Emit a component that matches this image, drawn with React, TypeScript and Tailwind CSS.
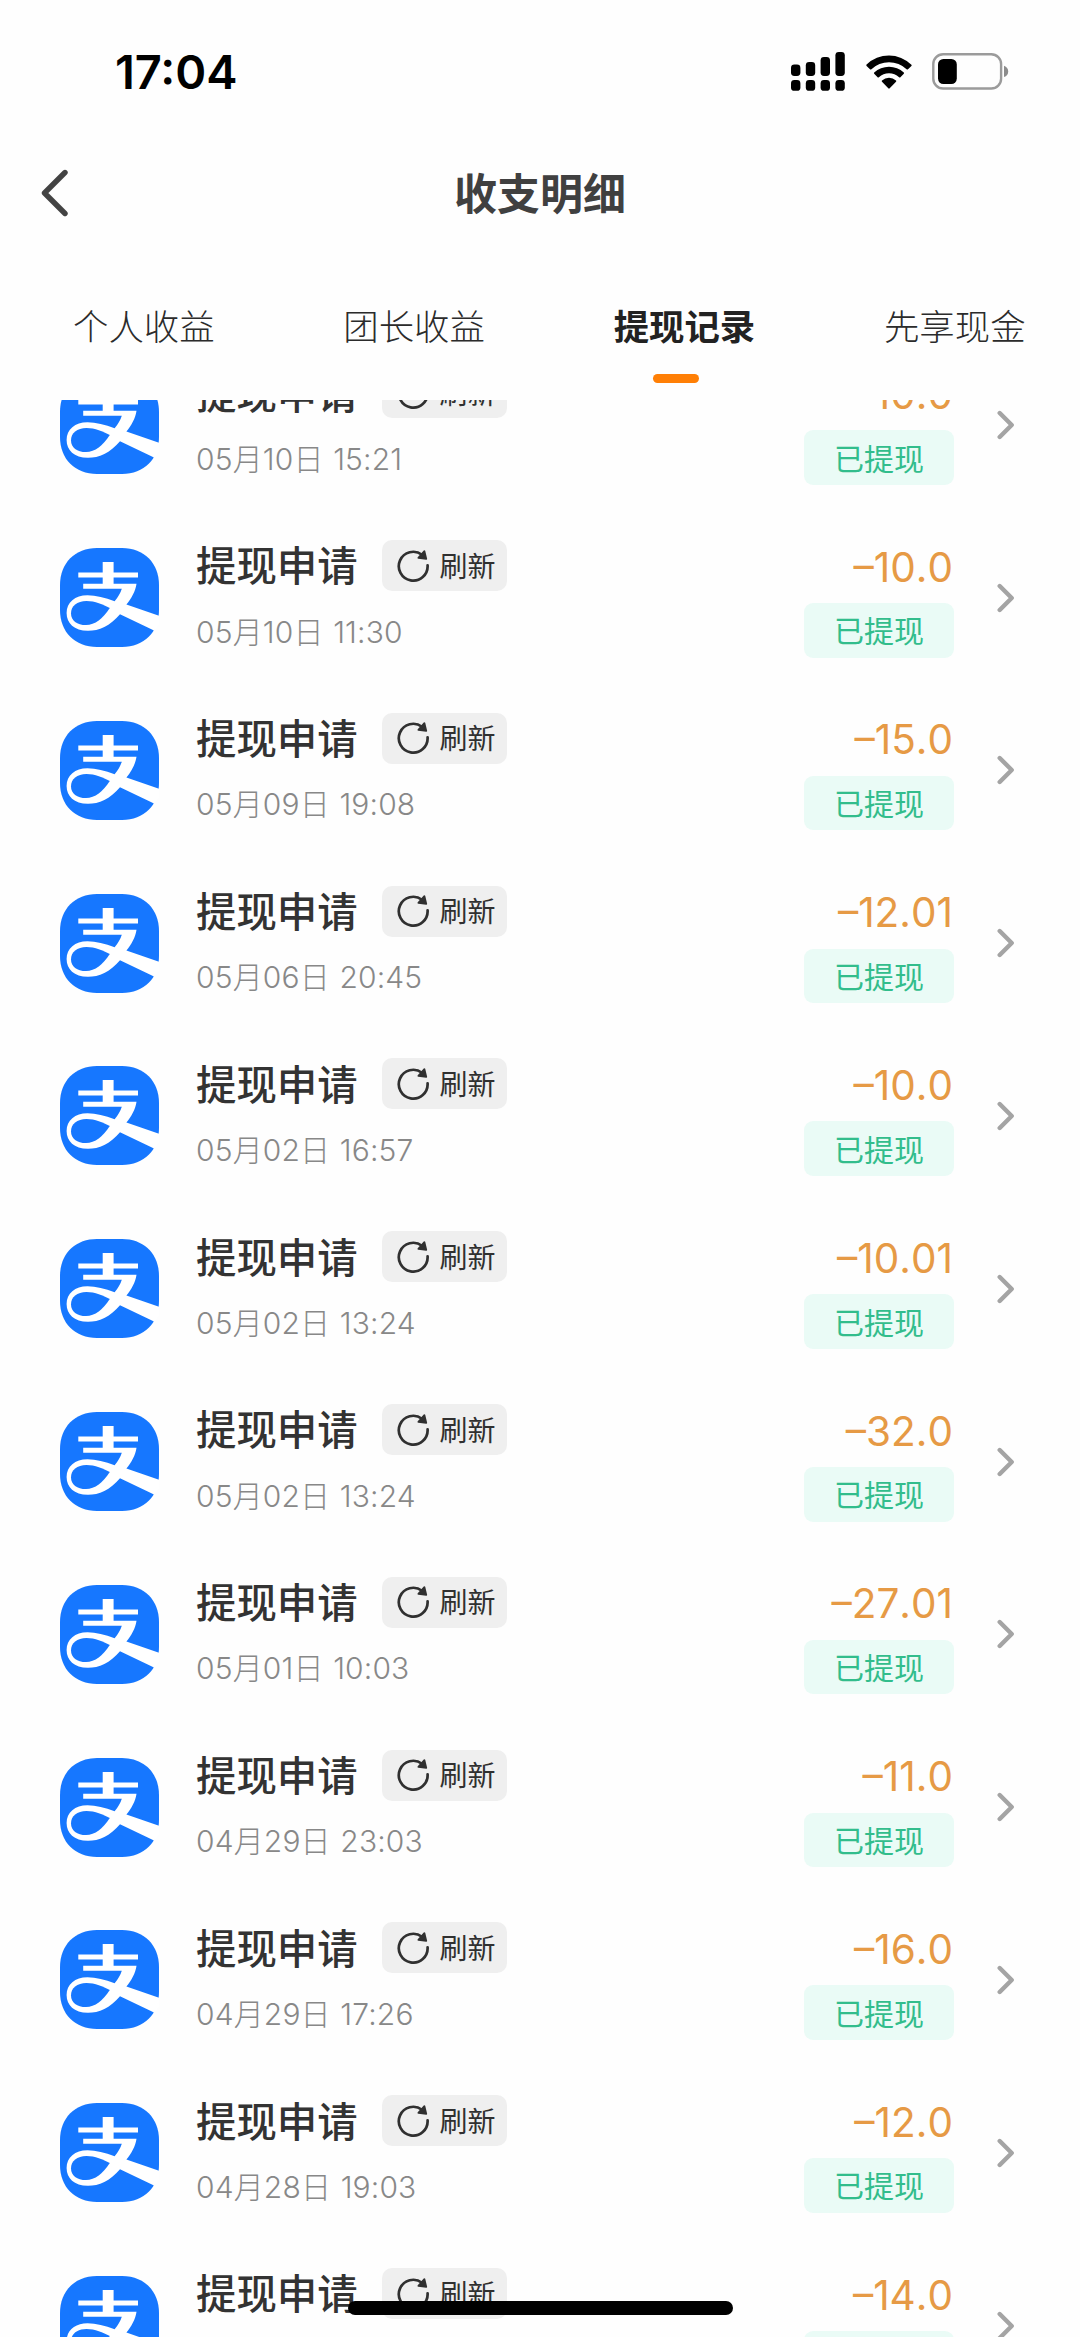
type Withdrawal = {
  time: string;
  amount: string;
};

const TABS = ['个人收益', '团长收益', '提现记录', '先享现金'];
const ACTIVE_TAB = '提现记录';

const WITHDRAWALS: Withdrawal[] = [
  { time: '05月10日 15:21', amount: '10.0' },
  { time: '05月10日 11:30', amount: '10.0' },
  { time: '05月09日 19:08', amount: '15.0' },
  { time: '05月06日 20:45', amount: '12.01' },
  { time: '05月02日 16:57', amount: '10.0' },
  { time: '05月02日 13:24', amount: '10.01' },
  { time: '05月02日 13:24', amount: '32.0' },
  { time: '05月01日 10:03', amount: '27.01' },
  { time: '04月29日 23:03', amount: '11.0' },
  { time: '04月29日 17:26', amount: '16.0' },
  { time: '04月28日 19:03', amount: '12.0' },
  { time: '', amount: '14.0' },
];

function SignalIcon() {
  const bars = [
    { x: 0, top: 12.5 },
    { x: 14.8, top: 10 },
    { x: 29.6, top: 5 },
    { x: 44.4, top: 0 },
  ];
  return (
    <svg width="54" height="39" viewBox="0 0 54 39" aria-hidden="true">
      {bars.map((bar) => (
        <g key={bar.x}>
          <rect x={bar.x} y={bar.top} width="9.4" height={24 - bar.top} rx="3.4" />
          <rect x={bar.x} y="28" width="9.4" height="10.8" rx="3.4" />
        </g>
      ))}
    </svg>
  );
}

function WifiIcon() {
  return (
    <svg width="46" height="35" viewBox="0 0 46 35" aria-hidden="true">
      <path d="M0.6 10.6a32 32 0 0 1 44.8 0.1q0.6 0.6 0 1.2l-3.4 3.4q-0.7 0.6-1.4 0a25.5 25.5 0 0 0-35.2 0q-0.7 0.6-1.4 0l-3.4-3.4q-0.6-0.6 0-1.3z" />
      <path d="M8.2 18.6a21.4 21.4 0 0 1 29.6 0q0.6 0.6 0 1.2l-3.4 3.4q-0.6 0.6-1.3 0a14.8 14.8 0 0 0-20.2 0q-0.7 0.6-1.3 0l-3.4-3.4q-0.6-0.6 0-1.2z" />
      <path d="M16 26.5a10.6 10.6 0 0 1 14 0q0.7 0.6 0 1.3l-6.3 6.5q-0.7 0.7-1.4 0l-6.3-6.5q-0.7-0.7 0-1.3z" />
    </svg>
  );
}

function BatteryIcon() {
  return (
    <svg width="77" height="37" viewBox="0 0 77 37" aria-hidden="true">
      <rect x="1.3" y="1.3" width="67.8" height="34.2" rx="9.8" fill="none" stroke="#9b9b9b" strokeWidth="2.4" />
      <rect x="6" y="6" width="18.8" height="25" rx="5.4" />
      <path d="M72 12.7c2.7 0.9 4.2 3 4.2 5.7s-1.5 4.8-4.2 5.7z" fill="#8c8c8c" />
    </svg>
  );
}

function AlipayLogo() {
  return (
    <svg width="99" height="99" viewBox="0 0 99 99" className="shrink-0" aria-hidden="true">
      <path
        d="M37 0H62C84 0 99 15 99 37V62C99 84 84 99 62 99H37C15 99 0 84 0 62V37C0 15 15 0 37 0z"
        fill="#1677ff"
      />
      <path
        d="M42.7 14H53.6V24.6H78V29.5H53.6V35.8H76.5C75.5 43 71.5 50.5 66.4 56.6L99 67.8V76C97.4 79 95.8 81 94 82.6L60 66.2C50 78 39 82.8 28 82.8C14 82.8 6.6 75 6.6 65C6.6 54.5 15 47.3 27.5 47.3C36 47.3 45 49.8 54.6 53.2C58 49 60.5 45 61.8 40.7H23.2V35.8H42.7V29.5H18.3V24.6H42.7z"
        fill="#fff"
      />
      <path
        d="M49.8 60C43 56.6 35 53 26.5 53C17 53 11 58 11 65.4C11 72.5 17 77 26 77C35 77 43 70.5 49.8 60z"
        fill="#1677ff"
      />
    </svg>
  );
}

function RefreshIcon() {
  return (
    <svg width="32" height="32" viewBox="0 0 32 32" fill="none" aria-hidden="true">
      <path d="M30.6 15.4A14.4 14.4 0 1 1 25 4.8" stroke="#303030" strokeWidth="2.7" strokeLinecap="round" />
      <path d="M27.4 1.2L29.2 8.8L21.4 7.8z" fill="#303030" stroke="#303030" strokeWidth="1.8" strokeLinejoin="round" />
    </svg>
  );
}

function StatusBar() {
  return (
    <div className="flex h-[143px] items-center justify-between pr-[71px] pl-[115px]">
      <span className="font-['Inter'] text-[47px] leading-none font-semibold text-black">17:04</span>
      <div className="flex items-center">
        <SignalIcon />
        <div className="ml-[21px]">
          <WifiIcon />
        </div>
        <div className="ml-5">
          <BatteryIcon />
        </div>
      </div>
    </div>
  );
}

function Header() {
  return (
    <header className="grid h-[100px] grid-cols-[1fr_auto_1fr] items-center px-[41px]">
      <button type="button" aria-label="返回" className="w-fit">
        <svg width="28" height="48" viewBox="0 0 28 48" fill="none">
          <path
            d="M24 3.5L3.5 24L24 44.5"
            stroke="#434343"
            strokeWidth="5.4"
            strokeLinecap="round"
            strokeLinejoin="round"
          />
        </svg>
      </button>
      <h1 className="pt-[2px] text-[43px] leading-none font-bold text-[#404040]">收支明细</h1>
    </header>
  );
}

function Tabs() {
  return (
    <nav className="flex h-[157px] justify-between pt-[61px] pr-[55px] pl-[73px]">
      {TABS.map((tab) => {
        const active = tab === ACTIVE_TAB;
        return (
          <div key={tab} className="flex w-[141px] flex-col">
            <span
              className={
                active
                  ? 'text-[35.4px] leading-[48px] font-bold whitespace-nowrap text-[#222]'
                  : 'text-[35.4px] leading-[48px] font-light whitespace-nowrap text-[#2b2b2b]'
              }
            >
              {tab}
            </span>
            {active && <span className="mt-[22px] ml-[39px] h-[9px] w-[46px] rounded-full bg-[#ff7f05]" />}
          </div>
        );
      })}
    </nav>
  );
}

function WithdrawalRow({ time, amount }: Withdrawal) {
  return (
    <li className="flex h-[172.8px] shrink-0 items-center pr-[65px] pl-[60px]">
      <AlipayLogo />
      <div className="ml-[37px] flex h-[120px] flex-col">
        <div className="flex h-[56px] items-center">
          <span className="pt-[4px] text-[40.4px] leading-none font-medium text-[#333]">提现申请</span>
          <button
            type="button"
            className="ml-[24px] flex h-[51px] w-[125px] items-center rounded-[10px] bg-[#efefef] pl-[15px]"
          >
            <RefreshIcon />
            <span className="ml-[11px] pt-[2px] text-[28px] leading-none whitespace-nowrap text-[#303030]">刷新</span>
          </button>
        </div>
        <span className="mt-[18px] text-[30px] leading-[40px] font-light tracking-[0.15px] text-[#888] [word-spacing:1px]">
          {time}
        </span>
      </div>
      <div className="ml-auto flex h-[120px] flex-col items-end">
        <span className="mr-[1px] h-[66px] text-[40.5px] leading-[60px] text-[#e69a45] [font-kerning:none]">
          –{amount}
        </span>
        <span className="flex h-[55px] w-[150px] items-center justify-center rounded-[9px] bg-[#eafbf6] pt-[2px] text-[30px] leading-none text-[#32bd8c]">
          已提现
        </span>
      </div>
      <svg width="18" height="30" viewBox="0 0 18 30" fill="none" className="ml-[43px]" aria-hidden="true">
        <path
          d="M2.7 3L14.7 15L2.7 27"
          stroke="#a4a4a4"
          strokeWidth="4.4"
          strokeLinecap="round"
          strokeLinejoin="round"
        />
      </svg>
    </li>
  );
}

export default function App() {
  return (
    <div className="relative flex h-[2337px] w-[1080px] flex-col overflow-hidden bg-[#fefefe] font-['Inter','Noto_Sans_CJK_SC',sans-serif]">
      <StatusBar />
      <Header />
      <Tabs />
      <main className="min-h-0 flex-1 overflow-hidden">
        {/* the list is scrolled, so its first row starts above the visible area */}
        <ul className="-mt-[61.6px] flex flex-col">
          {WITHDRAWALS.map((item, index) => (
            <WithdrawalRow key={index} {...item} />
          ))}
        </ul>
      </main>
      <div className="absolute bottom-[22px] left-[348px] h-[14px] w-[385px] rounded-full bg-black" />
    </div>
  );
}
